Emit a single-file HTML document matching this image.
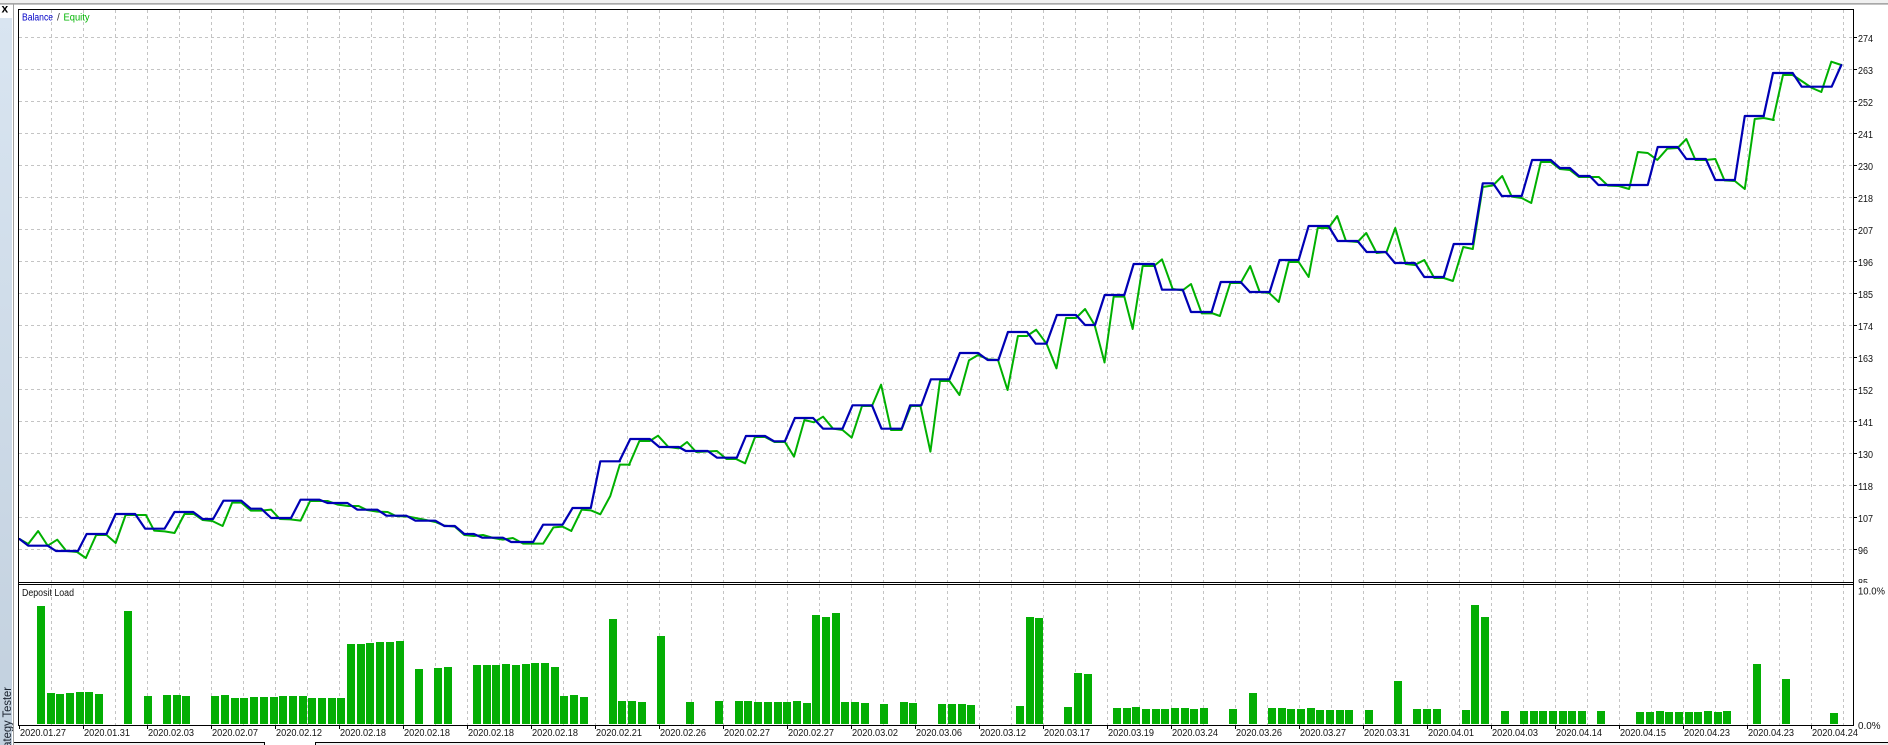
<!DOCTYPE html>
<html>
<head>
<meta charset="utf-8">
<title>Strategy Tester</title>
<style>
html,body{margin:0;padding:0;width:1888px;height:745px;overflow:hidden;background:#fff}
svg{display:block;position:absolute;left:0;top:0}
text{font-family:"Liberation Sans",sans-serif;fill:#111}
.l{fill:none;stroke-width:2;stroke-linejoin:round;stroke-linecap:round;vector-effect:non-scaling-stroke}
.g{stroke:#00b000}
.b{stroke:#0000b4;stroke-width:2.2}
</style>
</head>
<body>
<svg width="1888" height="745" viewBox="0 0 1888 745" xmlns="http://www.w3.org/2000/svg">
<defs>
<pattern id="v" patternUnits="userSpaceOnUse" x="51" y="10" width="32" height="6"><rect x="0" y="0" width="1" height="3" fill="#c4c4c4"/></pattern>
<pattern id="v2" patternUnits="userSpaceOnUse" x="51" y="585" width="32" height="6"><rect x="0" y="0" width="1" height="3" fill="#c4c4c4"/></pattern>
<pattern id="h" patternUnits="userSpaceOnUse" x="19" y="37" width="6" height="32"><rect x="0" y="0" width="3" height="1" fill="#c4c4c4"/></pattern>
<linearGradient id="side" x1="0" y1="0" x2="0" y2="1"><stop offset="0" stop-color="#d9e5f1"/><stop offset="1" stop-color="#c2d0de"/></linearGradient>
<clipPath id="sc"><rect x="0" y="18" width="13" height="727"/></clipPath>
</defs>

<!-- window chrome -->
<rect x="0" y="0" width="1888" height="3" fill="#f0f0f0"/>
<rect x="0" y="3" width="1888" height="1" fill="#a8a8a8"/>
<rect x="0" y="4" width="1888" height="1" fill="#c4c4c4"/>
<rect x="0" y="18" width="12" height="727" fill="url(#side)"/>
<rect x="13" y="4" width="1" height="741" fill="#a0a0a0"/>
<text x="1.5" y="12.5" font-size="12" font-weight="bold" style="fill:#000">x</text>
<g clip-path="url(#sc)"><text transform="translate(11,762) rotate(-90)" font-size="11.5" textLength="75" lengthAdjust="spacingAndGlyphs" style="fill:#1c2430">Strategy Tester</text></g>

<!-- grid -->
<rect x="51" y="10" width="1794" height="572" fill="url(#v)"/>
<rect x="51" y="585" width="1794" height="140" fill="url(#v2)"/>
<rect x="19" y="37" width="1834" height="513" fill="url(#h)"/>

<!-- equity -->
<g>
<polyline class="l g" transform="translate(0,400) scale(.41459,.33333)" points="47,417 68,432 92,393 115,437 138,419 160,453 186,456 207,474 232,405 257,405 279,429 303,345 352,345 372,392 397,394 421,399 445,342 468,342 489,360 512,363 537,378 560,308 582,308 605,332 630,332 654,329 675,357 700,358 725,362 748,303 770,303 790,303 815,314 840,318 865,318 885,330 910,335 935,336 955,348 985,350 1020,358 1050,366 1072,377 1097,380 1120,405 1143,408 1165,405 1190,414 1213,419 1237,414 1262,431 1310,431 1335,382 1357,380 1378,393 1403,329 1425,331 1448,343 1472,288 1495,194 1519,194"/>
<polyline class="l g" transform="translate(600,300) scale(.41459,.33333)" points="70,495 95,423 120,423 140,407 165,441 190,445 210,426 232,456 282,453 305,477 328,477 350,490 374,411 398,411 421,426 446,426 468,470 493,360 516,367 538,350 562,386 585,390 607,413 632,318 656,318 678,254 702,390 727,390 750,318 773,318 797,455 820,243 843,243 867,285 890,181 912,165 936,178 960,180 983,270 1008,108 1030,108 1052,89 1077,131 1101,205 1124,54 1148,54 1170,27 1193,75 1217,187"/>
<polyline class="l g" transform="translate(1090,190) scale(.33333)" points="43.5,517 71,320 103,320 128,417 158,228 192,228 216,208 248,297 278,301 303,282 335,370 365,370"/>
<polyline class="l g" transform="translate(1200,80) scale(.41459,.33333)" points="28,699 48,708 73,609 98,609 121,558 144,636 167,639 190,666 214,546 238,546 262,591 284,444 310,444 331,408 352,483 380,486 401,459 426,519 450,516 471,444 496,552 518,555 541,540 565,594 588,594 610,603 635,501 658,507 682,321 707,316 729,288 752,350 776,354 799,369 822,246 846,246 868,267 892,270 914,291 962,291 984,317 1010,318 1035,327 1056,216 1080,219 1103,240 1127,206 1152,204 1173,177 1195,240 1220,240 1243,237 1265,301 1290,303 1314,327 1338,117 1360,114 1384,120"/>
<polyline class="l g" transform="translate(1588,0) scale(.33333)" points="555,360 585,225 614,225 641,243 672,264 700,276 730,185 760,195"/>
</g>

<!-- balance -->
<g>
<polyline class="l b" transform="translate(0,400) scale(.41459,.33333)" points="47,417 68,437 115,437 135,453 188,453 209,402 257,402 279,342 326,342 350,386 397,386 421,336 466,336 489,357 514,357 539,302 582,302 605,326 630,326 654,354 702,354 725,299 770,299 790,309 838,309 862,329 910,329 932,347 980,347 1002,362 1050,362 1072,378 1097,378 1120,402 1143,402 1163,413 1213,413 1233,426 1286,426 1310,374 1357,374 1381,324 1425,324 1448,184 1495,184"/>
<polyline class="l b" transform="translate(600,300) scale(.41459,.33333)" points="47,483 73,417 120,417 143,441 190,441 207,453 260,453 282,473 330,473 352,408 398,408 420,424 446,424 470,354 514,354 538,386 585,386 609,316 656,316 679,386 728,386 748,316 775,316 798,238 843,238 868,159 912,159 935,180 961,180 984,96 1030,96 1051,131 1077,131 1102,45 1148,45 1170,75 1193,75"/>
<polyline class="l b" transform="translate(1090,190) scale(.33333)" points="15,405 44,315 103,315 131,222 192,222 216,299 278,299 303,366 365,366"/>
<polyline class="l b" transform="translate(1200,80) scale(.41459,.33333)" points="28,696 50,606 98,606 120,636 168,636 192,540 238,540 262,438 310,438 332,483 380,483 402,516 448,516 470,549 518,549 541,591 588,591 612,492 658,492 682,310 707,310 728,348 776,348 801,240 846,240 868,264 892,264 914,288 940,288 961,315 1080,315 1104,201 1152,201 1173,237 1220,237 1243,300 1290,300 1314,108 1360,108"/>
<polyline class="l b" transform="translate(1588,0) scale(.33333)" points="527,348 555,219 614,219 641,260 731,260 760,195"/>
</g>

<!-- deposit load bars -->
<path fill="#04ae04" shape-rendering="crispEdges" d="M37,606h8V724h-8zM47,693h8V724h-8zM56,694h8V724h-8zM66,693h8V724h-8zM76,692h8V724h-8zM85,692h8V724h-8zM95,694h8V724h-8zM124,611h8V724h-8zM144,696h8V724h-8zM163,695h8V724h-8zM173,695h8V724h-8zM182,696h8V724h-8zM211,696h8V724h-8zM221,695h8V724h-8zM231,698h8V724h-8zM240,698h8V724h-8zM250,697h8V724h-8zM260,697h8V724h-8zM270,697h8V724h-8zM279,696h8V724h-8zM289,696h8V724h-8zM299,696h8V724h-8zM308,698h8V724h-8zM318,698h8V724h-8zM328,698h8V724h-8zM337,698h8V724h-8zM347,644h8V724h-8zM357,644h8V724h-8zM366,643h8V724h-8zM376,642h8V724h-8zM386,642h8V724h-8zM396,641h8V724h-8zM415,669h8V724h-8zM434,668h8V724h-8zM444,667h8V724h-8zM473,665h8V724h-8zM483,665h8V724h-8zM492,665h8V724h-8zM502,664h8V724h-8zM512,665h8V724h-8zM522,664h8V724h-8zM531,663h8V724h-8zM541,663h8V724h-8zM551,667h8V724h-8zM560,696h8V724h-8zM570,695h8V724h-8zM580,697h8V724h-8zM609,619h8V724h-8zM618,701h8V724h-8zM628,701h8V724h-8zM638,702h8V724h-8zM657,636h8V724h-8zM686,702h8V724h-8zM715,701h8V724h-8zM735,701h8V724h-8zM744,701h8V724h-8zM754,702h8V724h-8zM764,702h8V724h-8zM774,702h8V724h-8zM783,702h8V724h-8zM793,701h8V724h-8zM803,703h8V724h-8zM812,615h8V724h-8zM822,617h8V724h-8zM832,613h8V724h-8zM841,702h8V724h-8zM851,702h8V724h-8zM861,703h8V724h-8zM880,704h8V724h-8zM900,702h8V724h-8zM909,703h8V724h-8zM938,704h8V724h-8zM948,704h8V724h-8zM958,704h8V724h-8zM967,705h8V724h-8zM1016,706h8V724h-8zM1026,617h8V724h-8zM1035,618h8V724h-8zM1064,707h8V724h-8zM1074,673h8V724h-8zM1084,674h8V724h-8zM1113,708h8V724h-8zM1123,708h8V724h-8zM1132,707h8V724h-8zM1142,709h8V724h-8zM1152,709h8V724h-8zM1161,709h8V724h-8zM1171,708h8V724h-8zM1181,708h8V724h-8zM1190,709h8V724h-8zM1200,708h8V724h-8zM1229,709h8V724h-8zM1249,693h8V724h-8zM1268,708h8V724h-8zM1278,708h8V724h-8zM1287,709h8V724h-8zM1297,709h8V724h-8zM1307,708h8V724h-8zM1316,710h8V724h-8zM1326,710h8V724h-8zM1336,710h8V724h-8zM1345,710h8V724h-8zM1365,710h8V724h-8zM1394,681h8V724h-8zM1413,709h8V724h-8zM1423,709h8V724h-8zM1433,709h8V724h-8zM1462,710h8V724h-8zM1471,605h8V724h-8zM1481,617h8V724h-8zM1501,711h8V724h-8zM1520,711h8V724h-8zM1530,711h8V724h-8zM1539,711h8V724h-8zM1549,711h8V724h-8zM1559,711h8V724h-8zM1568,711h8V724h-8zM1578,711h8V724h-8zM1597,711h8V724h-8zM1636,712h8V724h-8zM1646,712h8V724h-8zM1656,711h8V724h-8zM1665,712h8V724h-8zM1675,712h8V724h-8zM1685,712h8V724h-8zM1694,712h8V724h-8zM1704,711h8V724h-8zM1714,712h8V724h-8zM1723,711h8V724h-8zM1753,664h8V724h-8zM1782,679h8V724h-8zM1830,713h8V724h-8z"/>

<!-- y axis labels -->
<g font-size="10">
<text x="1858" y="42" textLength="15" lengthAdjust="spacingAndGlyphs">274</text>
<text x="1858" y="74" textLength="15" lengthAdjust="spacingAndGlyphs">263</text>
<text x="1858" y="106" textLength="15" lengthAdjust="spacingAndGlyphs">252</text>
<text x="1858" y="138" textLength="15" lengthAdjust="spacingAndGlyphs">241</text>
<text x="1858" y="170" textLength="15" lengthAdjust="spacingAndGlyphs">230</text>
<text x="1858" y="202" textLength="15" lengthAdjust="spacingAndGlyphs">218</text>
<text x="1858" y="234" textLength="15" lengthAdjust="spacingAndGlyphs">207</text>
<text x="1858" y="266" textLength="15" lengthAdjust="spacingAndGlyphs">196</text>
<text x="1858" y="298" textLength="15" lengthAdjust="spacingAndGlyphs">185</text>
<text x="1858" y="330" textLength="15" lengthAdjust="spacingAndGlyphs">174</text>
<text x="1858" y="362" textLength="15" lengthAdjust="spacingAndGlyphs">163</text>
<text x="1858" y="394" textLength="15" lengthAdjust="spacingAndGlyphs">152</text>
<text x="1858" y="426" textLength="15" lengthAdjust="spacingAndGlyphs">141</text>
<text x="1858" y="458" textLength="15" lengthAdjust="spacingAndGlyphs">130</text>
<text x="1858" y="490" textLength="15" lengthAdjust="spacingAndGlyphs">118</text>
<text x="1858" y="522" textLength="15" lengthAdjust="spacingAndGlyphs">107</text>
<text x="1858" y="554" textLength="10" lengthAdjust="spacingAndGlyphs">96</text>
<text x="1858" y="586" textLength="10" lengthAdjust="spacingAndGlyphs">85</text>
</g>
<rect x="1855" y="583" width="33" height="5" fill="#fff"/>
<g font-size="10">
<text x="1858" y="594.5" textLength="27" lengthAdjust="spacingAndGlyphs">10.0%</text>
<text x="1858" y="729" textLength="22.5" lengthAdjust="spacingAndGlyphs">0.0%</text>
</g>

<!-- frame -->
<g fill="#000" shape-rendering="crispEdges">
<rect x="18" y="9" width="1836" height="1"/>
<rect x="18" y="9" width="1" height="717"/>
<rect x="1853" y="9" width="1" height="717"/>
<rect x="18" y="582" width="1836" height="1"/>
<rect x="18" y="584" width="1836" height="1"/>
<rect x="18" y="725" width="1836" height="1"/>
</g>

<!-- y ticks -->
<path stroke="#000" stroke-width="1" shape-rendering="crispEdges" d="M1854 37.5h3M1854 69.5h3M1854 101.5h3M1854 133.5h3M1854 165.5h3M1854 197.5h3M1854 229.5h3M1854 261.5h3M1854 293.5h3M1854 325.5h3M1854 357.5h3M1854 389.5h3M1854 421.5h3M1854 453.5h3M1854 485.5h3M1854 517.5h3M1854 549.5h3"/>
<!-- x ticks -->
<path stroke="#000" stroke-width="1" shape-rendering="crispEdges" d="M19.5 726v3M83.5 726v3M147.5 726v3M211.5 726v3M275.5 726v3M339.5 726v3M403.5 726v3M467.5 726v3M531.5 726v3M595.5 726v3M659.5 726v3M723.5 726v3M787.5 726v3M851.5 726v3M915.5 726v3M979.5 726v3M1043.5 726v3M1107.5 726v3M1171.5 726v3M1235.5 726v3M1299.5 726v3M1363.5 726v3M1427.5 726v3M1491.5 726v3M1555.5 726v3M1619.5 726v3M1683.5 726v3M1747.5 726v3M1811.5 726v3"/>

<!-- x axis labels -->
<g font-size="10">
<text x="20" y="736" textLength="46" lengthAdjust="spacingAndGlyphs">2020.01.27</text>
<text x="84" y="736" textLength="46" lengthAdjust="spacingAndGlyphs">2020.01.31</text>
<text x="148" y="736" textLength="46" lengthAdjust="spacingAndGlyphs">2020.02.03</text>
<text x="212" y="736" textLength="46" lengthAdjust="spacingAndGlyphs">2020.02.07</text>
<text x="276" y="736" textLength="46" lengthAdjust="spacingAndGlyphs">2020.02.12</text>
<text x="340" y="736" textLength="46" lengthAdjust="spacingAndGlyphs">2020.02.18</text>
<text x="404" y="736" textLength="46" lengthAdjust="spacingAndGlyphs">2020.02.18</text>
<text x="468" y="736" textLength="46" lengthAdjust="spacingAndGlyphs">2020.02.18</text>
<text x="532" y="736" textLength="46" lengthAdjust="spacingAndGlyphs">2020.02.18</text>
<text x="596" y="736" textLength="46" lengthAdjust="spacingAndGlyphs">2020.02.21</text>
<text x="660" y="736" textLength="46" lengthAdjust="spacingAndGlyphs">2020.02.26</text>
<text x="724" y="736" textLength="46" lengthAdjust="spacingAndGlyphs">2020.02.27</text>
<text x="788" y="736" textLength="46" lengthAdjust="spacingAndGlyphs">2020.02.27</text>
<text x="852" y="736" textLength="46" lengthAdjust="spacingAndGlyphs">2020.03.02</text>
<text x="916" y="736" textLength="46" lengthAdjust="spacingAndGlyphs">2020.03.06</text>
<text x="980" y="736" textLength="46" lengthAdjust="spacingAndGlyphs">2020.03.12</text>
<text x="1044" y="736" textLength="46" lengthAdjust="spacingAndGlyphs">2020.03.17</text>
<text x="1108" y="736" textLength="46" lengthAdjust="spacingAndGlyphs">2020.03.19</text>
<text x="1172" y="736" textLength="46" lengthAdjust="spacingAndGlyphs">2020.03.24</text>
<text x="1236" y="736" textLength="46" lengthAdjust="spacingAndGlyphs">2020.03.26</text>
<text x="1300" y="736" textLength="46" lengthAdjust="spacingAndGlyphs">2020.03.27</text>
<text x="1364" y="736" textLength="46" lengthAdjust="spacingAndGlyphs">2020.03.31</text>
<text x="1428" y="736" textLength="46" lengthAdjust="spacingAndGlyphs">2020.04.01</text>
<text x="1492" y="736" textLength="46" lengthAdjust="spacingAndGlyphs">2020.04.03</text>
<text x="1556" y="736" textLength="46" lengthAdjust="spacingAndGlyphs">2020.04.14</text>
<text x="1620" y="736" textLength="46" lengthAdjust="spacingAndGlyphs">2020.04.15</text>
<text x="1684" y="736" textLength="46" lengthAdjust="spacingAndGlyphs">2020.04.23</text>
<text x="1748" y="736" textLength="46" lengthAdjust="spacingAndGlyphs">2020.04.23</text>
<text x="1812" y="736" textLength="46" lengthAdjust="spacingAndGlyphs">2020.04.24</text>
</g>

<!-- legends -->
<g font-size="10">
<text x="22" y="20.5" textLength="31" lengthAdjust="spacingAndGlyphs" style="fill:#0000c8">Balance</text>
<text x="57" y="20.5" style="fill:#333">/</text>
<text x="63.5" y="20.5" textLength="26" lengthAdjust="spacingAndGlyphs" style="fill:#00b400">Equity</text>
<text x="22" y="596" textLength="52" lengthAdjust="spacingAndGlyphs">Deposit Load</text>
</g>

<!-- bottom tab strip -->
<rect x="14" y="743" width="250" height="2" fill="#f0f0f0"/>
<rect x="316" y="743" width="1572" height="2" fill="#f0f0f0"/>
<g fill="#000" shape-rendering="crispEdges">
<rect x="14" y="742" width="251" height="1"/>
<rect x="264" y="742" width="1" height="3"/>
<rect x="315" y="742" width="1573" height="1"/>
<rect x="315" y="742" width="1" height="3"/>
</g>
</svg>
</body>
</html>
